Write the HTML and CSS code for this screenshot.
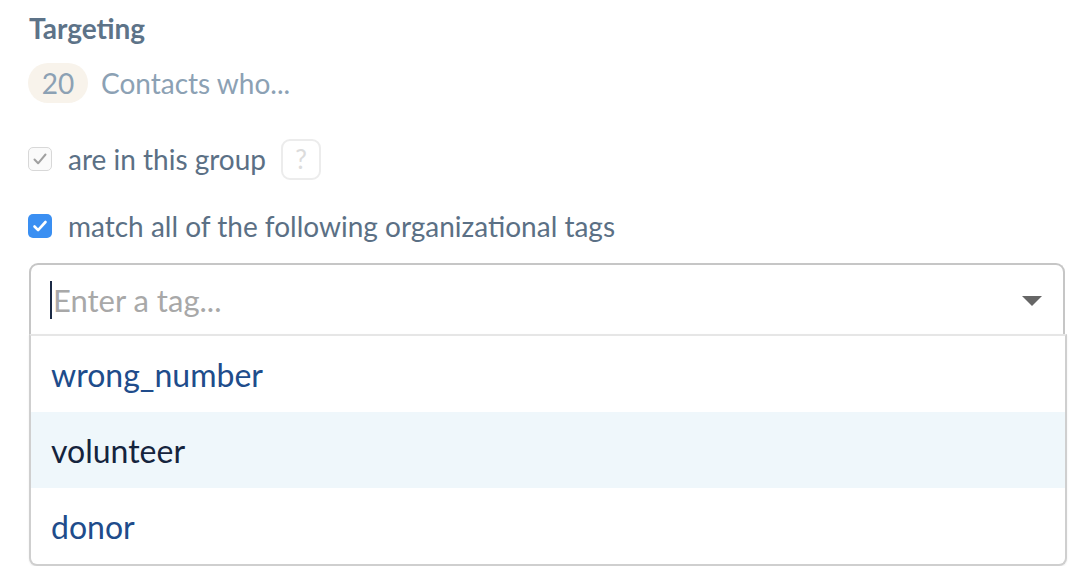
FILE: index.html
```html
<!DOCTYPE html>
<html>
<head>
<meta charset="utf-8">
<link rel="stylesheet" href="styles.css">
</head>
<body>
<div class="page">
  <h2 class="title">Targeting</h2>
  <div class="summary">
    <span class="badge">20</span>
    <span class="summary-text">Contacts who...</span>
  </div>
  <div class="option">
    <span class="check check-disabled">
      <svg viewBox="0 0 22 22" width="22" height="22"><path d="M5.5 11.5l3.6 3.8L16.5 6.5" fill="none" stroke="#a0a0a0" stroke-width="2" stroke-linecap="round" stroke-linejoin="round"/></svg>
    </span>
    <span class="option-label">are in this group</span>
    <span class="help">?</span>
  </div>
  <div class="option option-second">
    <span class="check check-on">
      <svg viewBox="0 0 24 24" width="24" height="24"><path d="M6.5 12.5l3.6 3.6L17.5 8" fill="none" stroke="#fff" stroke-width="2.6" stroke-linecap="round" stroke-linejoin="round"/></svg>
    </span>
    <span class="option-label">match all of the following organizational tags</span>
  </div>
  <div class="select">
    <div class="select-control">
      <span class="cursor"></span>
      <span class="placeholder">Enter a tag...</span>
      <span class="arrow"></span>
    </div>
    <div class="menu">
      <div class="menu-item">wrong_number</div>
      <div class="menu-item focused">volunteer</div>
      <div class="menu-item">donor</div>
    </div>
  </div>
</div>
</body>
</html>
```
FILE: styles.css
```css
html, body {
  margin: 0;
  padding: 0;
  background: #ffffff;
}
body {
  font-family: Lato, "Open Sans", sans-serif;
}
.page {
  padding: 11px 0 0 28px;
  width: 1038px;
}
.title {
  margin: 0;
  font-size: 28px;
  font-weight: 700;
  color: #5d7388;
  line-height: 34px;
  padding-left: 1px;
}
.summary {
  display: flex;
  align-items: center;
  margin-top: 18px;
}
.badge {
  display: inline-flex;
  align-items: center;
  justify-content: center;
  width: 60px;
  height: 40px;
  border-radius: 20px;
  background: #f8f3eb;
  color: #8ca1b4;
  font-size: 28px;
}
.summary-text {
  margin-left: 13px;
  font-size: 28px;
  color: #8ca1b4;
}
.option {
  display: flex;
  align-items: center;
  margin-top: 36px;
  height: 40px;
}
.option-second {
  margin-top: 27px;
}
.check {
  width: 24px;
  height: 24px;
  box-sizing: border-box;
  border-radius: 5px;
  display: inline-flex;
  align-items: center;
  justify-content: center;
}
.check-disabled {
  border: 1px solid #d8d8d8;
  background: #fafafa;
}
.check-on {
  background: #3a8ff2;
}
.option-label {
  margin-left: 16px;
  font-size: 28px;
  color: #5b7085;
}
.help {
  margin-left: 15px;
  width: 40px;
  height: 41px;
  box-sizing: border-box;
  border: 2px solid #ececec;
  border-radius: 9px;
  display: inline-flex;
  align-items: center;
  justify-content: center;
  font-size: 26px;
  color: #dcdcdc;
}
.select {
  margin-top: 17px;
  margin-left: 1px;
}
.select-control {
  position: relative;
  height: 71px;
  box-sizing: border-box;
  border: 2px solid #c6c6c6;
  border-bottom: none;
  border-radius: 9px 9px 0 0;
  display: flex;
  align-items: center;
  padding-left: 19px;
  width: 1036px;
}
.cursor {
  width: 2px;
  height: 38px;
  background: #1b2a45;
}
.placeholder {
  font-size: 31px;
  color: #a8a8a8;
  margin-left: 1px;
}
.arrow {
  position: absolute;
  right: 21px;
  top: 31px;
  width: 0;
  height: 0;
  border-left: 10px solid transparent;
  border-right: 10px solid transparent;
  border-top: 10px solid #666666;
}
.menu {
  width: 1038px;
  box-sizing: border-box;
  border: 2px solid #cfcfcf;
  border-top: 2px solid #e6e6e6;
  border-radius: 0 0 8px 8px;
  box-shadow: 0 1px 2px rgba(0,0,0,0.08);
  background: #fff;
}
.menu-item {
  height: 76px;
  display: flex;
  align-items: center;
  padding-left: 20px;
  font-size: 32px;
  color: #204c8b;
}
.menu-item.focused {
  background: #eff7fb;
  color: #15243d;
}
```
